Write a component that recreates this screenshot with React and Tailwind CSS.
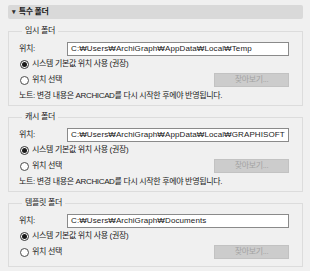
import React from "react";

const folders = [
    {
        title: "임시 폴더",
        path: "C:₩Users₩ArchiGraph₩AppData₩Local₩Temp",
        note: true,
    },
    {
        title: "캐시 폴더",
        path: "C:₩Users₩ArchiGraph₩AppData₩Local₩GRAPHISOFT",
        note: true,
    },
    {
        title: "템플릿 폴더",
        path: "C:₩Users₩ArchiGraph₩Documents",
        note: false,
    },
];

const Radio = ({ checked, label }) => (
    <label className="flex items-center gap-[3px]">
        <span
            className={
                "w-[9px] h-[9px] rounded-full border flex items-center justify-center bg-white " +
                (checked ? "border-[#333333]" : "border-[#4d4d4d]")
            }
        >
            {checked && <span className="w-[5px] h-[5px] rounded-full bg-[#1a1a1a]" />}
        </span>
        <span>{label}</span>
    </label>
);

const FolderGroup = ({ folder }) => (
    <fieldset className="border border-[#dcdcdc] pl-[10px] pr-[13px] pb-[1px]">
        <legend className="px-[3px] ml-[3px] leading-[10px]">{folder.title}</legend>

        <div className="flex items-center h-[14px] mt-[6px]">
            <span className="w-[48px]">위치:</span>
            <div className="flex-1 h-[14px] bg-white border border-[#8a8a8a] flex items-center pl-[3px] tracking-[0.1px]">
                {folder.path}
            </div>
        </div>

        <div className="flex items-center h-[16px] pl-[1px]">
            <Radio checked label="시스템 기본값 위치 사용 (권장)" />
        </div>

        <div className="flex items-center justify-between h-[16px] pl-[1px]">
            <Radio label="위치 선택" />
            <button className="w-[75px] h-[14px] bg-[#cccccc] border border-[#c2c2c2] text-[#a3a3a3] leading-none">
                찾아보기...
            </button>
        </div>

        {folder.note ? (
            <div className="h-[16px] flex items-center">
                노트: 변경 내용은 ARCHICAD를 다시 시작한 후에야 반영됩니다.
            </div>
        ) : (
            <div className="h-[5px]" />
        )}
    </fieldset>
);

export default function App() {
    return (
        <div
            className="w-[310px] h-[271px] bg-[#f0f0f0] text-[#1a1a1a] text-[8px] tracking-[-0.35px] pl-[8px] pr-[7px] pt-[5px] overflow-hidden"
            style={{ fontFamily: '"Liberation Sans", "Noto Sans CJK KR", sans-serif' }}
        >
            <div className="h-[14px] bg-[#d9d9d9] rounded-[2px] flex items-center pl-[4px] gap-[3px] font-bold">
                <span className="text-[7px] text-[#333333]">▾</span>
                <span>특수 폴더</span>
            </div>

            <div className="mt-[7px] flex flex-col gap-[6px]">
                {folders.map((f, i) => (
                    <FolderGroup key={i} folder={f} />
                ))}
            </div>
        </div>
    );
}
